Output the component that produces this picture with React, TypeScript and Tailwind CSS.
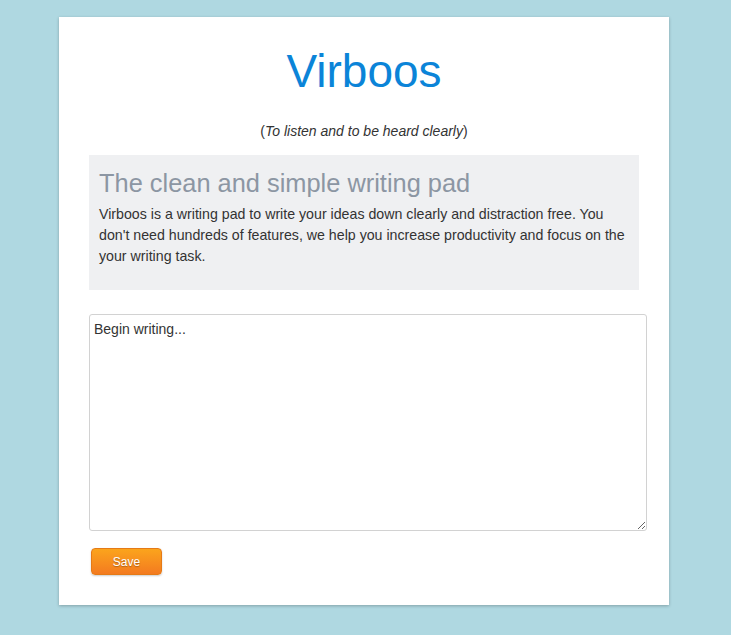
export default function App() {
  return (
    <div className="min-h-screen w-full bg-[#afd8e1] pt-[17px] pb-[30px]" style={{ fontFamily: '"Liberation Sans", Arial, sans-serif' }}>
      <div className="ml-[59px] w-[610px] bg-white shadow-[0_1px_3px_rgba(0,0,0,0.25)] pt-[31px] pb-[30px] pl-[30px]">
        <h1 className="text-center text-[46px] leading-none text-[#0b84d8] pr-[30px]">Virboos</h1>
        <p className="mt-[27px] text-center text-[14px] leading-[20px] text-[#333] pr-[30px]">
          (<span className="italic">To listen and to be heard clearly</span>)
        </p>
        <div className="mt-[14px] w-[550px] bg-[#eff0f2] px-[10px] pt-[15px] pb-[23px]">
          <h2 className="text-[25.4px] leading-[26px] text-[#8c96a3]">The clean and simple writing pad</h2>
          <p className="mt-[8px] text-[14.2px] leading-[21px] text-[#333]">
            Virboos is a writing pad to write your ideas down clearly and distraction free. You don't need hundreds of features, we help you increase productivity and focus on the your writing task.
          </p>
        </div>
        <textarea
          className="mt-[24px] block w-[558px] h-[217px] rounded-[3px] border border-[#d2d2d2] px-[4px] py-[4px] text-[14px] leading-[20px] text-[#333] outline-none"
          style={{ fontFamily: '"Liberation Sans", Arial, sans-serif' }}
          defaultValue="Begin writing..."
        />
        <button
          className="mt-[17px] ml-[2px] block h-[27px] w-[71px] rounded-[4px] border border-[#e57a16] bg-gradient-to-b from-[#fba41c] to-[#f37a20] text-[12px] text-white shadow-[0_1px_2px_rgba(0,0,0,0.2)] [text-shadow:0_1px_1px_rgba(0,0,0,0.3)]"
        >
          Save
        </button>
      </div>
    </div>
  );
}
